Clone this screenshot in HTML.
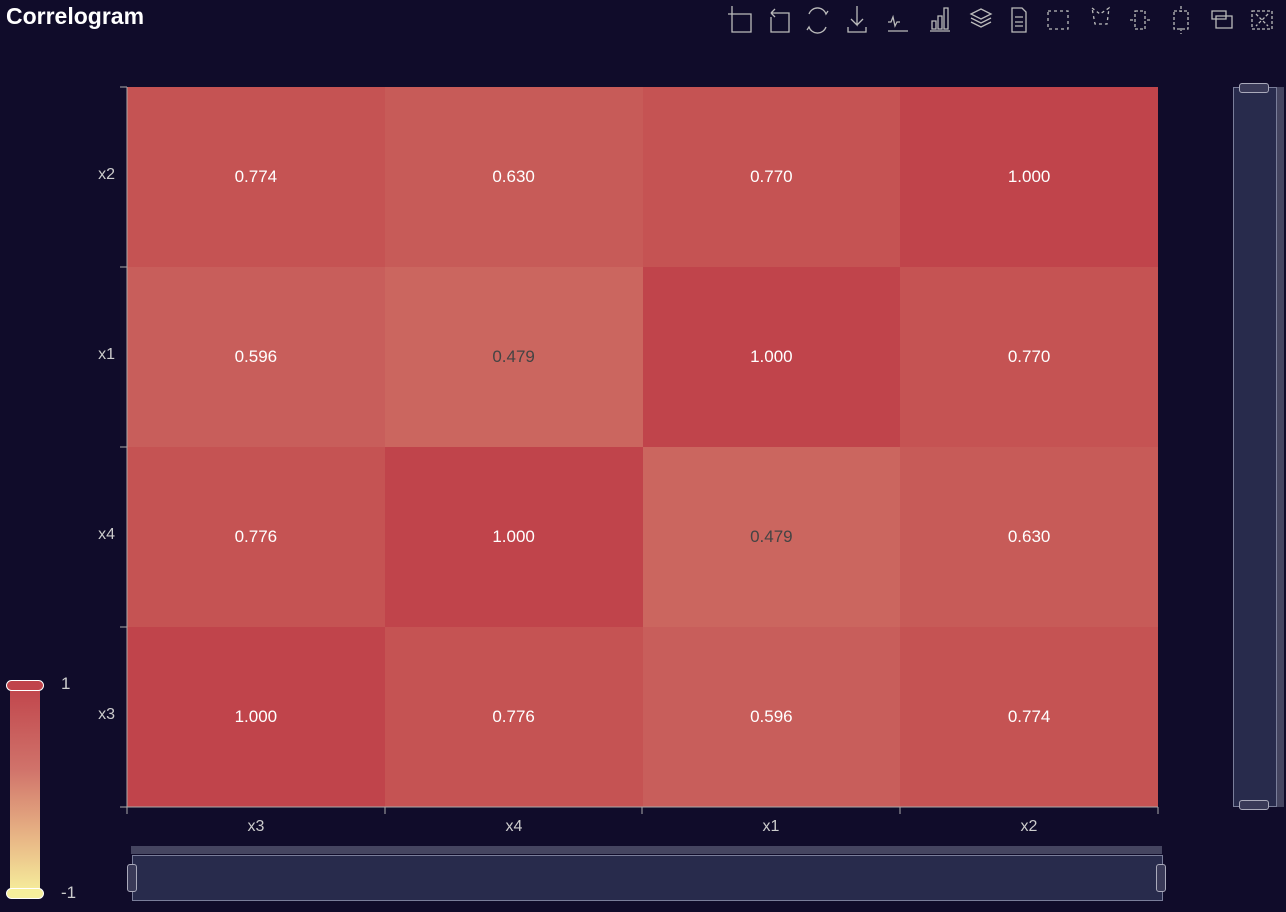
<!DOCTYPE html><html><head><meta charset="utf-8"><style>
body{margin:0;width:1286px;height:912px;background:#100c2a;font-family:"Liberation Sans",sans-serif;position:relative;overflow:hidden}
.t{position:absolute;left:6px;top:3px;color:#fff;font-weight:bold;font-size:23px}
.c{display:flex;align-items:center;justify-content:center;color:#fff;font-size:17px}
.yl{position:absolute;color:#ccc;font-size:16px;width:40px;text-align:right;left:75px}
.xl{position:absolute;color:#ccc;font-size:16px;top:818px;width:60px;text-align:center}
</style></head><body>
<div class="t">Correlogram</div>
<svg width="566" height="40" style="position:absolute;left:720px;top:0" fill="none" stroke="#bbb" stroke-width="1.3">
<path d="M12 11v21h19V14H8M12 6v5"/>
<path d="M51 17v15h18V13H52M51 13l4-4M51 13l4 4"/>
<path d="M89 14a9 9 0 0 1 17 0l2-3M106 27a9 9 0 0 1-17 0l-2 3"/>
<path d="M137 6v19l-6-6M137 25l6-6M128 27v5h18v-5"/>
<g transform="translate(13 0)"><path d="M155 31h20M155 22h3l2-5 2 9 2-4h3"/></g>
<g transform="translate(16 0)"><path d="M194 31h20M196 21h4v8h-4zM202 16h4v13h-4zM208 8h4v21h-4z"/></g>
<g transform="translate(13 0)"><path d="M238 14l10-5 10 5-10 5zM238 18l10 5 10-5M238 22l10 5 10-5"/></g>
<g transform="translate(4 0)"><path d="M288 8h10l4 4v20h-14zM291 17h8M291 22h8M291 26h8"/></g>
<path d="M328 11h20v18h-20z" stroke-dasharray="3 3"/>
<g transform="translate(4 0)"><path d="M368 8l8 6 9-6-2 16h-12z" stroke-dasharray="3 3"/></g>
<g transform="translate(3 0)"><path d="M412 11h10v18h-10zM410 20h-4M424 20h4" stroke-dasharray="3 2"/></g>
<g transform="translate(2 0)"><path d="M452 11h14v18h-14zM459 6v6M459 28v6" stroke-dasharray="3 2"/></g>
<path d="M492 11h14v8h-14zM496 16h16v12h-16z"/>
<path d="M532 11h20v18h-20zM536 14l12 12M548 14l-12 12" stroke-dasharray="3 2"/>
</svg>
<div style="position:absolute;left:127px;top:87px;width:1031px;height:720px;display:grid;grid-template-columns:repeat(4,1fr);grid-template-rows:repeat(4,1fr)">
<div class="c" style="background:#c55353">0.774</div><div class="c" style="background:#c75b58">0.630</div><div class="c" style="background:#c55353">0.770</div><div class="c" style="background:#c0444b">1.000</div>
<div class="c" style="background:#c85e5b">0.596</div><div class="c" style="background:#cb665f;color:#444">0.479</div><div class="c" style="background:#c0444b">1.000</div><div class="c" style="background:#c55353">0.770</div>
<div class="c" style="background:#c55353">0.776</div><div class="c" style="background:#c0444b">1.000</div><div class="c" style="background:#cb665f;color:#444">0.479</div><div class="c" style="background:#c75b58">0.630</div>
<div class="c" style="background:#c0444b">1.000</div><div class="c" style="background:#c55353">0.776</div><div class="c" style="background:#c85e5b">0.596</div><div class="c" style="background:#c55353">0.774</div>
</div>
<svg width="1286" height="912" style="position:absolute;left:0;top:0" stroke="#aaa" fill="none">
<path d="M127 87v721M120 87h7M120 267h7M120 447h7M120 627h7M120 807h7M127 807h1031M127 807v7M385 807v7M642 807v7M900 807v7M1158 807v7"/>
</svg>
<div class="yl" style="top:166px">x2</div><div class="yl" style="top:346px">x1</div><div class="yl" style="top:526px">x4</div><div class="yl" style="top:706px">x3</div>
<div class="xl" style="left:226px">x3</div><div class="xl" style="left:484px">x4</div><div class="xl" style="left:741px">x1</div><div class="xl" style="left:999px">x2</div>
<div style="position:absolute;left:10px;top:685px;width:30px;height:208px;background:linear-gradient(#c0444b,#d0726a 40%,#e9b987 75%,#f6ef9c)"></div>
<div style="position:absolute;left:6px;top:680px;width:36px;height:9px;border:1.5px solid #fff;border-radius:6px;background:#c0444b"></div>
<div style="position:absolute;left:6px;top:888px;width:36px;height:9px;border:1.5px solid #fff;border-radius:6px;background:#f6ef9c"></div>
<div style="position:absolute;left:61px;top:674px;color:#ccc;font-size:17px">1</div>
<div style="position:absolute;left:61px;top:883px;color:#ccc;font-size:17px">-1</div>
<div style="position:absolute;left:131px;top:846px;width:1031px;height:8px;background:#454560"></div>
<div style="position:absolute;left:132px;top:855px;width:1029px;height:44px;background:#282b4c;border:1px solid #7a7e9a"></div>
<div style="position:absolute;left:127px;top:864px;width:8px;height:26px;border:1px solid #aab;border-radius:3px;background:#3a3a58"></div>
<div style="position:absolute;left:1156px;top:864px;width:8px;height:26px;border:1px solid #aab;border-radius:3px;background:#3a3a58"></div>
<div style="position:absolute;left:1276px;top:87px;width:8px;height:720px;background:#454560"></div>
<div style="position:absolute;left:1233px;top:87px;width:42px;height:718px;background:#282b4c;border:1px solid #7a7e9a"></div>
<div style="position:absolute;left:1239px;top:83px;width:28px;height:8px;border:1px solid #aab;border-radius:3px;background:#3a3a58"></div>
<div style="position:absolute;left:1239px;top:800px;width:28px;height:8px;border:1px solid #aab;border-radius:3px;background:#3a3a58"></div>
</body></html>
